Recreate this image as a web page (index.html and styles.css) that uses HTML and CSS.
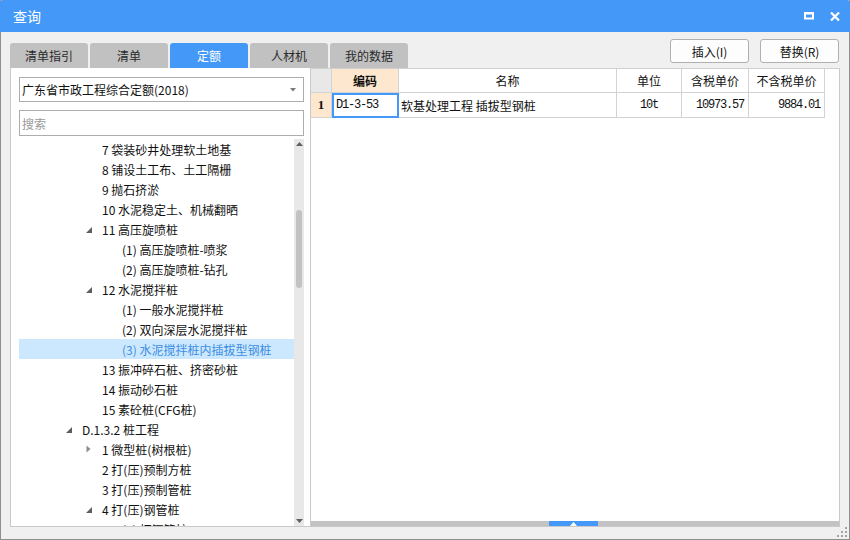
FILE: index.html
```html
<!DOCTYPE html>
<html lang="zh-CN">
<head>
<meta charset="utf-8">
<title>查询</title>
<link rel="stylesheet" href="styles.css">
</head>
<body>
<div class="window">
  <div class="titlebar">
    <span class="title">查询</span>
    <div class="controls">
      <svg class="ctl" width="10" height="8" viewBox="0 0 10 8"><rect x="1" y="1.5" width="8" height="5" fill="none" stroke="#fff" stroke-width="2"/><rect x="0" y="0" width="10" height="2" fill="#fff"/></svg>
      <svg class="ctl" width="10" height="9" viewBox="0 0 10 9"><path d="M1 0.5 L9 8.5 M9 0.5 L1 8.5" stroke="#fff" stroke-width="2.2" fill="none"/></svg>
    </div>
  </div>
  <div class="content">
    <div class="toolbar">
      <div class="tabs">
        <div class="tab">清单指引</div>
        <div class="tab">清单</div>
        <div class="tab active">定额</div>
        <div class="tab">人材机</div>
        <div class="tab">我的数据</div>
      </div>
      <div class="actions">
        <button class="btn">插入(I)</button>
        <button class="btn">替换(R)</button>
      </div>
    </div>
    <div class="main">
      <div class="left">
        <div class="select">
          <span>广东省市政工程综合定额(2018)</span>
          <svg class="arrow" width="6" height="4" viewBox="0 0 6 4"><path d="M0 0 L6 0 L3 3.5 Z" fill="#7a7a7a"/></svg>
        </div>
        <div class="search">搜索</div>
        <div class="tree-wrap">
          <div class="tree">
            <div class="row l3"><span class="tog"></span><span>7 袋装砂井处理软土地基</span></div>
            <div class="row l3"><span class="tog"></span><span>8 铺设土工布、土工隔栅</span></div>
            <div class="row l3"><span class="tog"></span><span>9 抛石挤淤</span></div>
            <div class="row l3"><span class="tog"></span><span>10 水泥稳定土、机械翻晒</span></div>
            <div class="row l3"><span class="tog"><svg class="exp" width="6" height="6" viewBox="0 0 6 6"><path d="M6 0 L6 6 L0 6 Z" fill="#5e5e5e"/></svg></span><span>11 高压旋喷桩</span></div>
            <div class="row l4"><span class="tog"></span><span>(1) 高压旋喷桩-喷浆</span></div>
            <div class="row l4"><span class="tog"></span><span>(2) 高压旋喷桩-钻孔</span></div>
            <div class="row l3"><span class="tog"><svg class="exp" width="6" height="6" viewBox="0 0 6 6"><path d="M6 0 L6 6 L0 6 Z" fill="#5e5e5e"/></svg></span><span>12 水泥搅拌桩</span></div>
            <div class="row l4"><span class="tog"></span><span>(1) 一般水泥搅拌桩</span></div>
            <div class="row l4"><span class="tog"></span><span>(2) 双向深层水泥搅拌桩</span></div>
            <div class="row l4 sel"><span class="tog"></span><span>(3) 水泥搅拌桩内插拔型钢桩</span></div>
            <div class="row l3"><span class="tog"></span><span>13 振冲碎石桩、挤密砂桩</span></div>
            <div class="row l3"><span class="tog"></span><span>14 振动砂石桩</span></div>
            <div class="row l3"><span class="tog"></span><span>15 素砼桩(CFG桩)</span></div>
            <div class="row l2"><span class="tog"><svg class="exp" width="6" height="6" viewBox="0 0 6 6"><path d="M6 0 L6 6 L0 6 Z" fill="#5e5e5e"/></svg></span><span>D.1.3.2 桩工程</span></div>
            <div class="row l3"><span class="tog"><svg class="col" width="5" height="8" viewBox="0 0 5 8"><path d="M0.5 0.5 L4.5 4 L0.5 7.5 Z" fill="#8c8c8c"/></svg></span><span>1 微型桩(树根桩)</span></div>
            <div class="row l3"><span class="tog"></span><span>2 打(压)预制方桩</span></div>
            <div class="row l3"><span class="tog"></span><span>3 打(压)预制管桩</span></div>
            <div class="row l3"><span class="tog"><svg class="exp" width="6" height="6" viewBox="0 0 6 6"><path d="M6 0 L6 6 L0 6 Z" fill="#5e5e5e"/></svg></span><span>4 打(压)钢管桩</span></div>
            <div class="row l4"><span class="tog"></span><span>(1) 打钢管桩</span></div>
          </div>
          <div class="vscroll">
            <svg class="sarrow up" width="7" height="4" viewBox="0 0 7 4"><path d="M0 4 L3.5 0 L7 4 Z" fill="#606060"/></svg>
            <div class="thumb" style="margin-top:64px;height:78px"></div>
            <svg class="sarrow down" width="7" height="4" viewBox="0 0 7 4"><path d="M0 0 L7 0 L3.5 4 Z" fill="#606060"/></svg>
          </div>
        </div>
      </div>
      <div class="right">
        <div class="grid">
          <div class="c corner"></div>
          <div class="c hl bold">编码</div>
          <div class="c">名称</div>
          <div class="c">单位</div>
          <div class="c">含税单价</div>
          <div class="c">不含税单价</div>

          <div class="c hl rownum">1</div>
          <div class="c mono selcell">D1-3-53</div>
          <div class="c leftal">软基处理工程 插拔型钢桩</div>
          <div class="c mono">10t</div>
          <div class="c mono rightal">10973.57</div>
          <div class="c mono rightal">9884.01</div>
        </div>
        <div class="filler"></div>
        <div class="hscroll">
          <div class="hthumb" style="margin-left:238px">
            <svg width="7" height="4" viewBox="0 0 7 4"><path d="M0 4 L3.5 0 L7 4 Z" fill="#fff"/></svg>
          </div>
        </div>
      </div>
    </div>
  </div>
  <svg class="grip" width="10" height="10" viewBox="0 0 10 10">
    <rect x="8" y="0" width="2" height="2" fill="#a3a3a3"/>
    <rect x="4" y="4" width="2" height="2" fill="#a3a3a3"/>
    <rect x="8" y="4" width="2" height="2" fill="#a3a3a3"/>
    <rect x="0" y="8" width="2" height="2" fill="#a3a3a3"/>
    <rect x="4" y="8" width="2" height="2" fill="#a3a3a3"/>
    <rect x="8" y="8" width="2" height="2" fill="#a3a3a3"/>
  </svg>
</div>
</body>
</html>
```

FILE: styles.css
```css
* { box-sizing: border-box; }
html, body { margin: 0; padding: 0; }
body {
  width: 850px;
  height: 540px;
  overflow: hidden;
  font-family: "Noto Sans CJK SC", "Noto Sans", sans-serif;
  font-size: 12px;
  color: #111;
  background: #f0f0f0;
}
.window {
  position: relative;
  width: 850px;
  height: 540px;
  border: 1px solid #8f8f8f;
  border-top: none;
  background: #f0f0f0;
  display: flex;
  flex-direction: column;
}
.titlebar {
  height: 32px;
  margin: 0 -1px;
  background: #4499f8;
  display: flex;
  align-items: center;
  padding: 0 10px 0 13px;
  color: #fff;
  border-radius: 3px 3px 0 0;
}
.title { font-size: 14px; line-height: 20px; }
.controls { margin-left: auto; display: flex; align-items: center; gap: 16px; }
.ctl { display: block; }

.content {
  flex: 1;
  display: flex;
  flex-direction: column;
  padding: 0 9px 12px 9px;
  min-height: 0;
}
.toolbar { height: 36px; display: flex; align-items: flex-end; flex-shrink: 0; }
.tabs { display: flex; gap: 2px; }
.tab {
  width: 78px;
  height: 25px;
  background: #c1c1c1;
  border-radius: 3px 3px 0 0;
  display: flex;
  align-items: center;
  justify-content: center;
  color: #2a2a2a;
  font-size: 12px;
}
.tab.active { background: #4499f8; color: #fff; }
.actions {
  margin-left: auto;
  align-self: flex-start;
  margin-top: 7px;
  margin-right: 1px;
  display: flex;
  gap: 11px;
}
.btn {
  width: 79px;
  height: 24px;
  border: 1px solid #b0b0b0;
  border-radius: 3px;
  background: #fdfdfd;
  font-family: "Noto Sans CJK SC", "Noto Sans", sans-serif;
  font-size: 12px;
  color: #111;
  padding: 0;
}

.main { flex: 1; display: flex; min-height: 0; }
.left {
  width: 301px;
  flex-shrink: 0;
  background: #fff;
  border: 1px solid #c9c9c9;
  border-top: none;
  display: flex;
  flex-direction: column;
  padding: 9px 0 0 8px;
}
.select {
  width: 285px;
  height: 25px;
  border: 1px solid #adadad;
  display: flex;
  align-items: center;
  padding: 0 7px 0 2px;
  flex-shrink: 0;
}
.select .arrow { margin-left: auto; display: block; }
.search {
  width: 285px;
  height: 26px;
  margin-top: 8px;
  border: 1px solid #adadad;
  padding-left: 2px;
  color: #9a9a9a;
  display: flex;
  align-items: center;
  flex-shrink: 0;
}
.tree-wrap { flex: 1; min-height: 0; display: flex; margin-top: 3px; }
.tree { width: 275px; overflow: hidden; }
.row {
  height: 20px;
  display: flex;
  align-items: center;
  white-space: nowrap;
  color: #111;
}
.l2 { padding-left: 43px; }
.l3 { padding-left: 63px; }
.l4 { padding-left: 83px; }
.tog { width: 20px; height: 20px; display: flex; align-items: center; flex-shrink: 0; }
.tog .exp { margin-left: 4px; margin-top: 2px; }
.tog .col { margin-left: 4px; }
.row.sel { background: #cce8ff; color: #3d8ee2; }
.vscroll {
  width: 10px;
  background: #e8e8e8;
  display: flex;
  flex-direction: column;
  align-items: center;
}
.sarrow { display: block; flex-shrink: 0; }
.sarrow.up { margin-top: 3px; }
.sarrow.down { margin-top: auto; margin-bottom: 3px; }
.thumb { width: 6px; background: #c2c2c2; border-radius: 3px; }

.right {
  flex: 1;
  background: #fff;
  border-top: 1px solid #d0d0d0;
  border-right: 1px solid #c9c9c9;
  border-bottom: 1px solid #c9c9c9;
  display: flex;
  flex-direction: column;
}
.grid {
  display: grid;
  grid-template-columns: 21px 67px 218px 65px 67px 76px;
  grid-template-rows: 24px 25px;
}
.c {
  border-right: 1px solid #d3d3d3;
  border-bottom: 1px solid #d3d3d3;
  display: flex;
  align-items: center;
  justify-content: center;
  white-space: nowrap;
  overflow: hidden;
}
.corner { background: #e8e8e8; }
.hl { background: #fde8cf; }
.bold { font-weight: bold; }
.rownum { font-family: "Liberation Serif", serif; font-weight: bold; font-size: 13px; }
.mono { font-family: "Liberation Mono", monospace; font-size: 12px; letter-spacing: -1.2px; }
.leftal { justify-content: flex-start; padding-left: 2px; }
.rightal { justify-content: flex-end; padding-right: 4px; }
.selcell {
  outline: 2px solid #4499f8;
  outline-offset: -2px;
  justify-content: flex-start;
  padding-left: 4px;
}
.filler { flex: 1; }
.hscroll { height: 5px; background: #c3c3c3; display: flex; flex-shrink: 0; }
.hthumb {
  width: 49px;
  height: 5px;
  background: #4499f8;
  display: flex;
  align-items: center;
  justify-content: center;
}
.hthumb svg { display: block; }
.grip { position: absolute; right: 2px; bottom: 2px; }
```
